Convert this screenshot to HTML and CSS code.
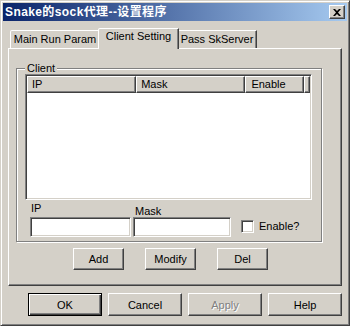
FILE: index.html
```html
<!DOCTYPE html>
<html lang="zh-CN">
	<head>
		<meta charset="UTF-8" />
		<title>Snake的sock代理--设置程序</title>
		<link rel="stylesheet" href="styles.css">
	</head>
	<body>
		<div class="window">
			<div class="titlebar">
				<span class="title">Snake的sock代理--设置程序</span>
				<button class="close-btn">
					<svg width="8" height="7" viewBox="0 0 8 7">
						<path d="M0 0h2l2 2 2-2h2L5 3.5 8 7H6L4 5 2 7H0l3-3.5z" fill="#000" />
					</svg>
				</button>
			</div>

			<div class="content">
				<div class="tabs">
					<div class="tab tab-main">Main Run Param</div>
					<div class="tab tab-client active">Client Setting</div>
					<div class="tab tab-pass">Pass SkServer</div>
				</div>

				<div class="panel">
					<fieldset class="group">
						<legend>Client</legend>
						<div class="list">
							<div class="list-header">
								<div class="col col-ip">IP</div>
								<div class="col col-mask">Mask</div>
								<div class="col col-enable">Enable</div>
								<div class="col col-fill"></div>
							</div>
						</div>

						<div class="fields">
							<div class="field field-ip">
								<label>IP</label>
								<input type="text" class="edit edit-ip" />
							</div>
							<div class="field field-mask">
								<label>Mask</label>
								<input type="text" class="edit edit-mask" />
							</div>
							<div class="check">
								<span class="checkbox"></span>
								<span>Enable?</span>
							</div>
						</div>
					</fieldset>

					<div class="actions">
						<button class="btn btn-small">Add</button>
						<button class="btn btn-small">Modify</button>
						<button class="btn btn-small">Del</button>
					</div>
				</div>

				<div class="footer">
					<button class="btn btn-default">OK</button>
					<button class="btn">Cancel</button>
					<button class="btn disabled">Apply</button>
					<button class="btn">Help</button>
				</div>
			</div>
		</div>
	</body>
</html>
```

FILE: styles.css
```css
* {
	box-sizing: border-box;
}
body {
	margin: 0;
	background: #d4d0c8;
	font-family: "Liberation Sans", Arial, sans-serif;
	font-size: 11px;
	color: #000;
}
.window {
	width: 350px;
	height: 326px;
	padding: 2px;
	background: #d4d0c8;
	border: 1px solid;
	border-color: #d4d0c8 #404040 #404040 #d4d0c8;
	box-shadow: inset 1px 1px #fff, inset -1px -1px #808080;
}

/* title bar */
.titlebar {
	height: 18px;
	display: flex;
	align-items: center;
	justify-content: space-between;
	padding-left: 2px;
	background: linear-gradient(to right, #0a246a, #a6caf0);
}
.title {
	color: #fff;
	font-weight: bold;
	font-size: 12px;
	letter-spacing: 0.4px;
	font-family: "Liberation Sans", "Noto Sans CJK SC", sans-serif;
	line-height: 18px;
}
.close-btn {
	width: 16px;
	height: 14px;
	margin-right: 2px;
	padding: 0;
	display: flex;
	align-items: center;
	justify-content: center;
	background: #d4d0c8;
	border: 1px solid;
	border-color: #fff #404040 #404040 #fff;
	box-shadow: inset -1px -1px #808080;
}

.content {
	padding: 7px 5px 0 5px;
}

/* tabs */
.tabs {
	height: 20px;
	display: flex;
	align-items: flex-end;
	padding-left: 2px;
}
.tab {
	height: 18px;
	line-height: 16px;
	text-align: center;
	border: 1px solid;
	border-bottom: none;
	border-color: #fff #404040 transparent #fff;
	border-top-left-radius: 2px;
	box-shadow: inset -1px 0 #808080;
	background: #d4d0c8;
}
.tab-main {
	width: 90px;
}
.tab-client {
	width: 81px;
}
.tab-pass {
	width: 80px;
}
.tab.active {
	position: relative;
	z-index: 1;
	height: 21px;
	line-height: 15px;
	margin: 0 -2px -1px -2px;
}

/* panel */
.panel {
	height: 238px;
	border: 1px solid;
	border-color: #fff #404040 #404040 #fff;
	box-shadow: inset -1px -1px #808080;
}

.group {
	width: 306px;
	margin: 13px 0 0 7px;
	padding: 0 9px 4px 8px;
	min-width: 0;
	border: 1px solid #808080;
	box-shadow: inset 1px 1px #fff, 1px 1px #fff;
}
.group legend {
	padding: 0 2px;
	line-height: 12px;
	background: #d4d0c8;
}

.list {
	height: 126px;
	background: #fff;
	border: 1px solid;
	border-color: #808080 #fff #fff #808080;
	box-shadow: inset 1px 1px #404040, inset -1px -1px #d4d0c8;
	padding: 1px;
}
.list-header {
	display: flex;
	height: 17px;
}
.col {
	height: 17px;
	line-height: 15px;
	padding-left: 4px;
	background: #d4d0c8;
	border: 1px solid;
	border-color: #fff #404040 #404040 #fff;
	box-shadow: inset -1px -1px #808080;
}
.col-ip,
.col-mask {
	width: 110px;
}
.col-enable {
	width: 59px;
	padding-left: 5px;
}
.col-fill {
	flex: 1;
}

.fields {
	height: 37px;
	display: flex;
	align-items: flex-end;
	padding-left: 5px;
}
.field {
	display: flex;
	flex-direction: column;
}
.field label {
	line-height: 13px;
}
.field-ip label {
	padding-left: 1px;
	margin-bottom: 2px;
}
.field-mask {
	margin-left: 2px;
}
.field-mask label {
	padding-left: 2px;
	margin-bottom: -1px;
}
.edit {
	height: 20px;
	margin: 0;
	padding: 0 3px;
	font: inherit;
	background: #fff;
	border: 1px solid;
	border-color: #808080 #fff #fff #808080;
	box-shadow: inset 1px 1px #404040, inset -1px -1px #d4d0c8;
	outline: none;
}
.edit-ip {
	width: 101px;
}
.edit-mask {
	width: 98px;
}
.check {
	display: flex;
	align-items: center;
	margin: 0 0 4px 10px;
	line-height: 13px;
}
.checkbox {
	width: 13px;
	height: 13px;
	margin-right: 5px;
	background: #fff;
	border: 1px solid;
	border-color: #808080 #fff #fff #808080;
	box-shadow: inset 1px 1px #404040, inset -1px -1px #d4d0c8;
}

/* buttons */
.btn {
	width: 75px;
	height: 23px;
	padding: 0;
	font: inherit;
	color: #000;
	background: #d4d0c8;
	border: 1px solid;
	border-color: #fff #404040 #404040 #fff;
	box-shadow: inset -1px -1px #808080;
}
.btn-small {
	width: 51px;
	height: 22px;
}
.btn-default {
	border-color: #000;
	box-shadow: inset 1px 1px #fff, inset -1px -1px #404040, inset -2px -2px #808080;
}
.btn.disabled {
	color: #808080;
	text-shadow: 1px 1px #fff;
}
.actions {
	display: flex;
	gap: 21px;
	margin: 6px 0 0 64px;
}
.footer {
	display: flex;
	gap: 6px;
	margin-top: 7px;
	padding-left: 20px;
}
```
